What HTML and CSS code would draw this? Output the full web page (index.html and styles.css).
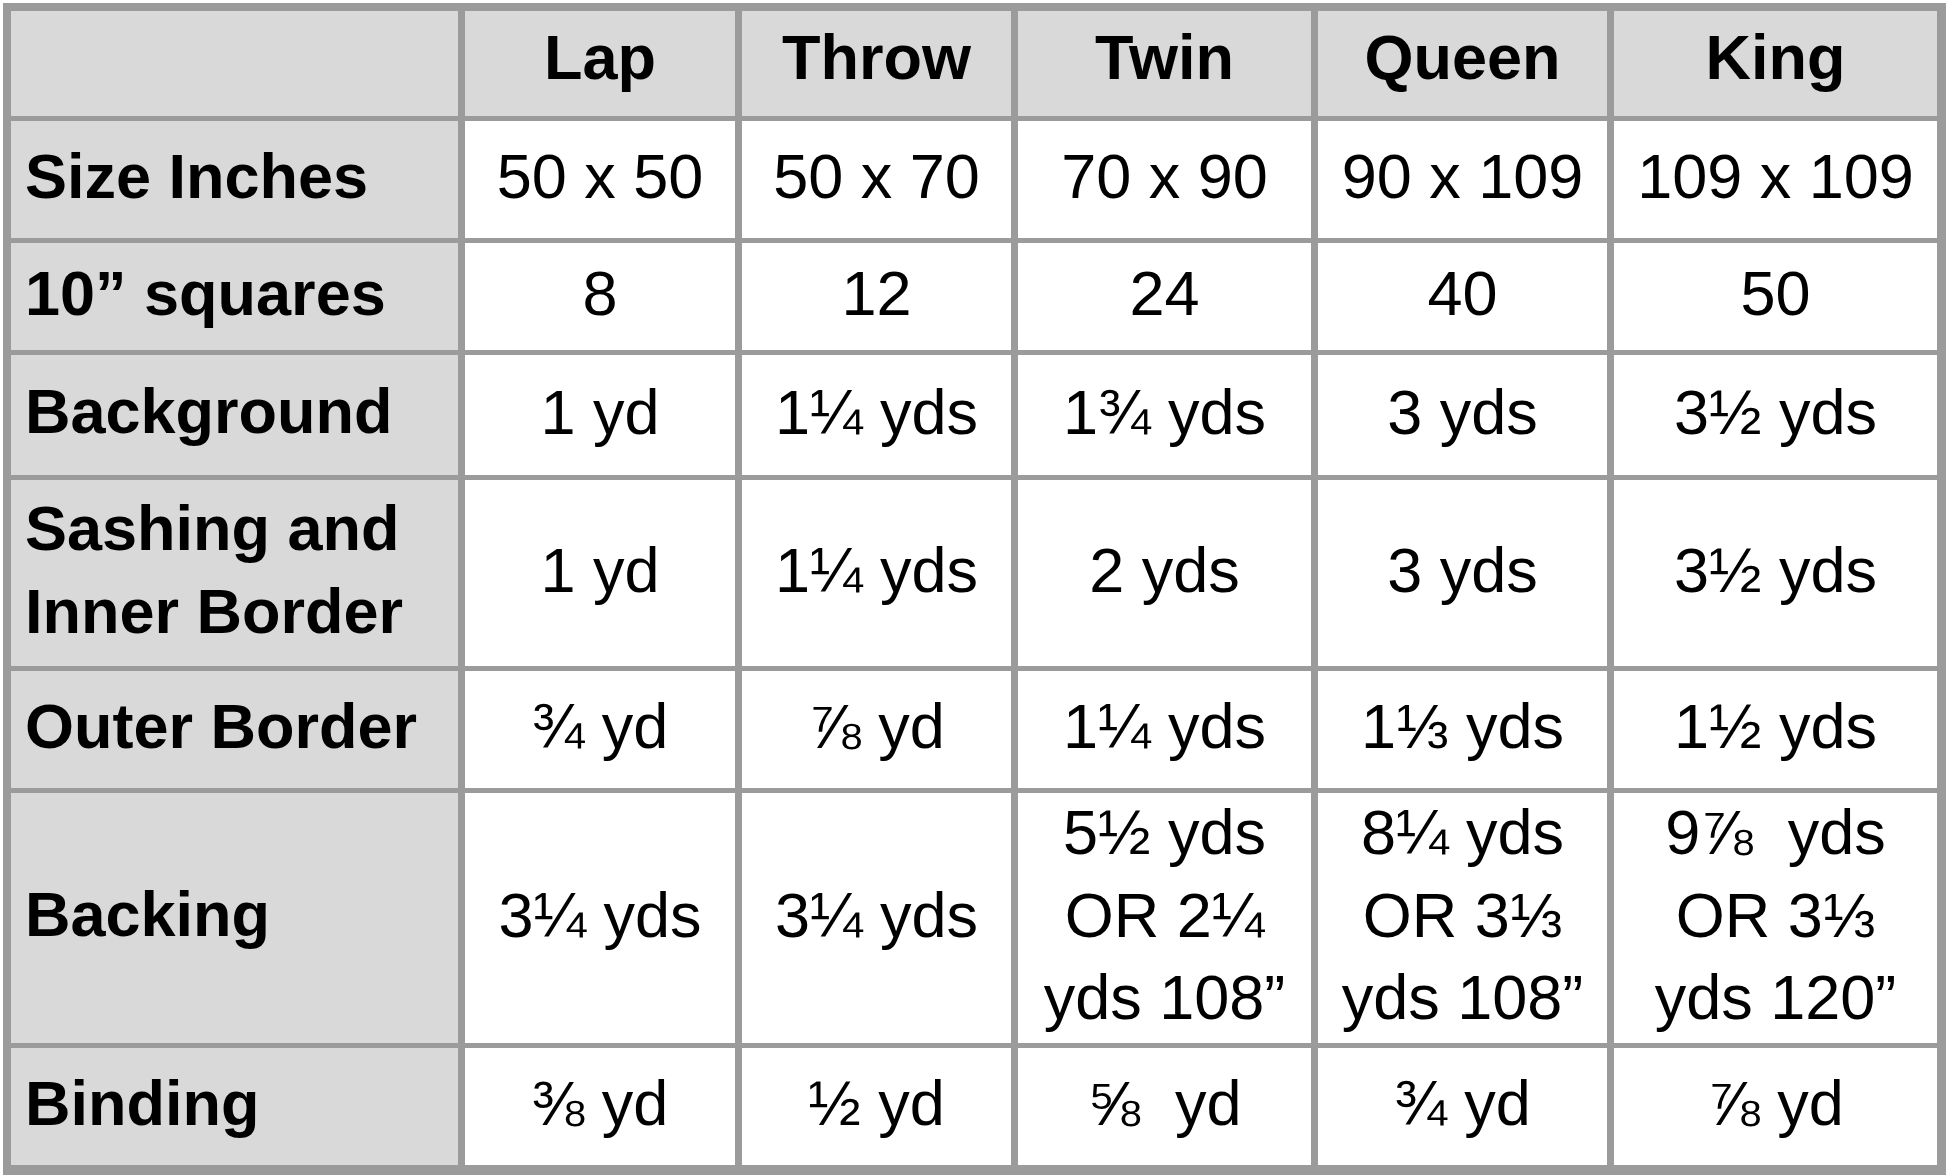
FILE: index.html
```html
<!DOCTYPE html>
<html lang="en">
<head>
<meta charset="utf-8">
<title>Quilt Sizes</title>
<link rel="stylesheet" href="styles.css">
</head>
<body>
<div class="sheet">
  <div class="cell head corner"></div>
  <div class="cell head">Lap</div>
  <div class="cell head">Throw</div>
  <div class="cell head">Twin</div>
  <div class="cell head">Queen</div>
  <div class="cell head">King</div>

  <div class="cell label">Size Inches</div>
  <div class="cell val">50 x 50</div>
  <div class="cell val">50 x 70</div>
  <div class="cell val">70 x 90</div>
  <div class="cell val">90 x 109</div>
  <div class="cell val">109 x 109</div>

  <div class="cell label">10” squares</div>
  <div class="cell val">8</div>
  <div class="cell val">12</div>
  <div class="cell val">24</div>
  <div class="cell val">40</div>
  <div class="cell val">50</div>

  <div class="cell label">Background</div>
  <div class="cell val">1 yd</div>
  <div class="cell val">1¼ yds</div>
  <div class="cell val">1¾ yds</div>
  <div class="cell val">3 yds</div>
  <div class="cell val">3½ yds</div>

  <div class="cell label">Sashing and<br>Inner Border</div>
  <div class="cell val">1 yd</div>
  <div class="cell val">1¼ yds</div>
  <div class="cell val">2 yds</div>
  <div class="cell val">3 yds</div>
  <div class="cell val">3½ yds</div>

  <div class="cell label">Outer Border</div>
  <div class="cell val">¾ yd</div>
  <div class="cell val">⅞ yd</div>
  <div class="cell val">1¼ yds</div>
  <div class="cell val">1⅓ yds</div>
  <div class="cell val">1½ yds</div>

  <div class="cell label">Backing</div>
  <div class="cell val">3¼ yds</div>
  <div class="cell val">3¼ yds</div>
  <div class="cell val">5½ yds<br>OR 2¼<br>yds 108”</div>
  <div class="cell val">8¼ yds<br>OR 3⅓<br>yds 108”</div>
  <div class="cell val">9⅞&nbsp; yds<br>OR 3⅓<br>yds 120”</div>

  <div class="cell label">Binding</div>
  <div class="cell val">⅜ yd</div>
  <div class="cell val">½ yd</div>
  <div class="cell val">⅝&nbsp; yd</div>
  <div class="cell val">¾ yd</div>
  <div class="cell val">⅞ yd</div>
</div>
</body>
</html>
```

FILE: styles.css
```css
html, body {
  margin: 0;
  padding: 0;
  background: #ffffff;
}

body {
  font-family: "Liberation Sans", Arial, "DejaVu Sans", sans-serif;
  color: #000000;
}

.sheet {
  margin: 3px 0 0 3px;
  width: 1926px;
  display: grid;
  grid-template-columns: 447px 270px 269px 293px 289px 323px;
  grid-template-rows: 105px 117px 107px 120px 186px 117px 250px 117px;
  column-gap: 7px;
  row-gap: 5px;
  padding: 8px 9px 10px 8px;
  background: #9b9b9b;
}

.cell {
  display: flex;
  align-items: center;
  justify-content: center;
  text-align: center;
  font-size: 63px;
  line-height: 1.31;
  box-sizing: border-box;
  padding-bottom: 6px;
  white-space: nowrap;
}

.head {
  background: #d9d9d9;
  font-weight: bold;
  padding-bottom: 13px;
}

.label {
  background: #d9d9d9;
  font-weight: bold;
  justify-content: flex-start;
  text-align: left;
  padding-left: 14px;
  padding-bottom: 7px;
}

.val {
  background: #ffffff;
}
```
